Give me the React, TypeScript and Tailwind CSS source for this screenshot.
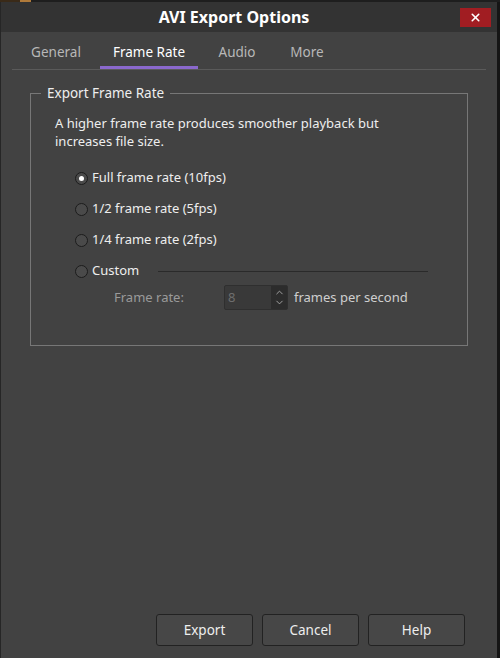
import { ChevronUp, ChevronDown, X } from 'lucide-react';

const font = { fontFamily: '"Noto Sans", "Open Sans", sans-serif' };

function Radio({ checked, label }: { checked?: boolean; label: string }) {
  return (
    <div className="flex items-center h-[20px]">
      <span className="w-[13px] h-[13px] rounded-full border border-[#1c1c1c] bg-[#4a4a4a] flex items-center justify-center shrink-0">
        {checked && <span className="w-[5px] h-[5px] rounded-full bg-white" />}
      </span>
      <span className="ml-[4px] text-[#eeeeee] text-[13px]">{label}</span>
    </div>
  );
}

export default function App() {
  const tabs = ['General', 'Frame Rate', 'Audio', 'More'];

  return (
    <div className="w-[500px] h-[658px] bg-[#202020] flex flex-col overflow-hidden" style={font}>
      {/* background peeking above the window */}
      <div className="h-[2px] flex shrink-0">
        <div className="w-[20px] bg-[#3a2a18]" />
        <div className="w-[11px] bg-[#b07a3a]" />
        <div className="flex-1 bg-[#1e1e1e]" />
      </div>

      <div className="flex-1 flex flex-col border-l border-r-[3px] border-l-[#262626] border-r-[#151515]">
        {/* Title bar */}
        <div className="h-[30px] bg-[#333333] relative flex items-center justify-center shrink-0">
          <span className="text-white font-bold text-[16px] mr-[30px]">AVI Export Options</span>
          <div className="absolute right-[6px] top-[6px] w-[31px] h-[19px] bg-[#a11d22] flex items-center justify-center">
            <X className="w-[13px] h-[13px] text-white" strokeWidth={3} />
          </div>
        </div>

        {/* Body */}
        <div className="flex-1 bg-[#424242] flex flex-col">
          {/* Tabs */}
          <div className="mx-[11px] mt-[6px] border-b border-[#5a5a5a] flex h-[32px]">
            {tabs.map((t) => {
              const active = t === 'Frame Rate';
              return (
                <div
                  key={t}
                  className={`flex items-center justify-center text-[13.5px] border-b-[3px] ${
                    active ? 'text-white border-[#8a68cc] w-[98px]' : 'text-[#b8b8b8] border-transparent'
                  } ${t === 'General' ? 'w-[88px]' : ''} ${t === 'Audio' ? 'w-[78px]' : ''} ${t === 'More' ? 'w-[62px]' : ''}`}
                >
                  {t}
                </div>
              );
            })}
          </div>

          {/* Group box */}
          <div className="mx-[29px] mt-[23px] h-[253px] border border-[#777777] relative px-[24px] pt-[20px]">
            <span className="absolute -top-[11px] left-[10px] bg-[#424242] px-[6px] text-[13.5px] text-[#eeeeee]">
              Export Frame Rate
            </span>
            <p className="text-[13px] leading-[18px] text-[#eeeeee]">
              A higher frame rate produces smoother playback but
              <br />
              increases file size.
            </p>

            <div className="mt-[18px] ml-[20px] flex flex-col gap-[11px]">
              <Radio checked label="Full frame rate (10fps)" />
              <Radio label="1/2 frame rate (5fps)" />
              <Radio label="1/4 frame rate (2fps)" />
              <div className="flex items-center">
                <Radio label="Custom" />
                <div className="flex-1 h-px bg-[#2a2a2a] ml-[19px] mr-[15px]" />
              </div>
            </div>

            <div className="flex items-center mt-[4px] ml-[59px]">
              <span className="text-[13px] text-[#9a9a9a] w-[110px]">Frame rate:</span>
              <div className="w-[64px] h-[25px] bg-[#393939] border border-[#2f2f2f] rounded-[2px] flex">
                <span className="flex-1 text-[13px] text-[#6e6e6e] pl-[3px] leading-[22px]">8</span>
                <div className="w-[16px] bg-[#2c2c2c] flex flex-col items-center justify-center text-[#aaaaaa]">
                  <ChevronUp className="w-[11px] h-[11px] -mb-[1px]" strokeWidth={2} />
                  <ChevronDown className="w-[11px] h-[11px]" strokeWidth={2} />
                </div>
              </div>
              <span className="ml-[6px] text-[13px] text-[#cfcfcf]">frames per second</span>
            </div>
          </div>

          <div className="flex-1" />

          {/* Buttons */}
          <div className="flex justify-end gap-[9px] pr-[32px] pb-[12px]">
            {['Export', 'Cancel', 'Help'].map((b) => (
              <button
                key={b}
                className="w-[97px] h-[32px] bg-[#474747] border border-[#222222] rounded-[3px] text-[13.5px] text-[#eeeeee]"
              >
                {b}
              </button>
            ))}
          </div>
        </div>
      </div>
    </div>
  );
}
